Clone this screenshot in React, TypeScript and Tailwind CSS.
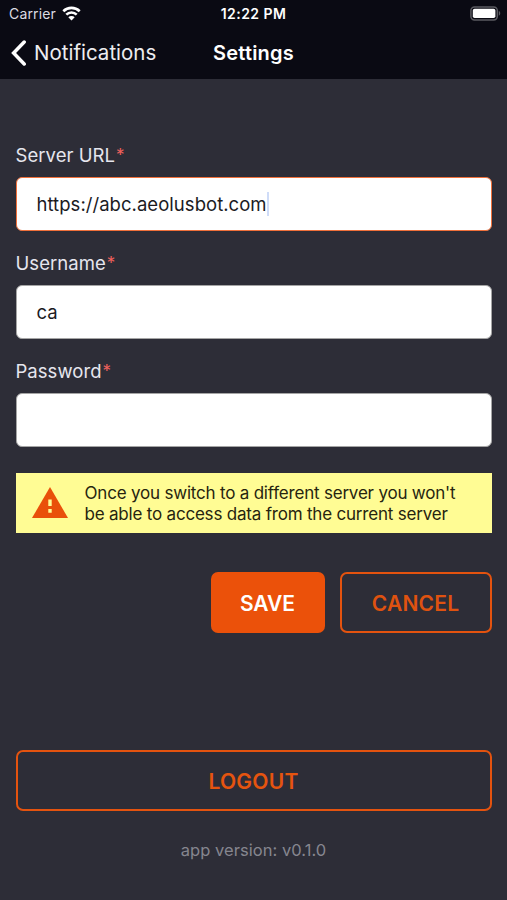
import React from "react";
import clsx from "clsx";

const StatusBar = () => (
    <div className="grid h-[27px] grid-cols-3 items-center pl-[9px] pr-[6px] text-white">
        <div className="flex items-center gap-[6px]">
            <span className="text-[14px] leading-[18px] tracking-[0.15px] text-[#dcdce2]">Carrier</span>
            <svg width="19" height="15" viewBox="0 0 19 15" fill="none" stroke="white" strokeWidth="2.6">
                <path d="M1.3 5.2a11.7 11.7 0 0 1 16.4 0" />
                <path d="M4.3 8.7a7.4 7.4 0 0 1 10.4 0" />
                <path d="M9.5 14.4 6.3 11.3a4.5 4.5 0 0 1 6.4 0z" fill="white" stroke="none" />
            </svg>
        </div>
        <span className="-ml-[3px] text-center text-[14px] leading-[18px] font-semibold tracking-[0.45px] whitespace-nowrap">12:22 PM</span>
        <svg className="justify-self-end" width="31" height="15" viewBox="0 0 31 15">
            <rect x="0.9" y="0.9" width="26.4" height="13" rx="3.6" fill="#0b0b13" stroke="#5b5b61" strokeWidth="1.5" />
            <rect x="2.8" y="2.8" width="22.6" height="9.2" rx="1.8" fill="white" />
            <path d="M28.8 5.1c1.9.7 1.9 4 0 4.7z" fill="#5b5b61" />
        </svg>
    </div>
);

const NavBar = () => (
    <div className="grid h-[52px] grid-cols-[200px_107px_200px] items-center text-white">
        <div className="flex items-center gap-[8px] pl-[11px]">
            <svg width="15" height="26" viewBox="0 0 15 26" fill="none" stroke="white" strokeWidth="3.5" strokeLinecap="round">
                <path d="M13.2 2 2.6 13l10.6 11" />
            </svg>
            <span className="text-[20.5px] leading-[26px] text-[#ededf0]">Notifications</span>
        </div>
        <span className="text-center text-[20px] leading-[26px] font-semibold tracking-[0.2px]">Settings</span>
    </div>
);

type FieldProps = {
    label: string;
    value?: string;
    focused?: boolean;
};

const Field = ({ label, value, focused }: FieldProps) => (
    <div className="flex flex-col gap-[10px]">
        <p className="h-[24px] text-[18.5px] leading-[24px] tracking-[0.05px] text-[#e6e6ee]">
            {label}
            <span className="ml-px align-[1px] text-[17px] leading-none text-[#f0605c]">*</span>
        </p>
        <div
            className={clsx(
                "flex h-[54px] items-center rounded-[6px] border bg-white pl-[20px] text-[18.5px] leading-[24px] tracking-[0.04px] text-[#1b1b1f]",
                focused ? "border-[#f0703a]" : "border-[#a5a5a5]"
            )}
        >
            <span>{value}</span>
            {focused && <span className="h-[24px] w-[2px] bg-[#cfdcf8]" />}
        </div>
    </div>
);

const Warning = () => (
    <div className="mt-[26px] flex h-[60px] items-center bg-[#fffc94] pl-[16px]">
        <svg className="mb-[2px]" width="36" height="31" viewBox="0 0 36 31">
            <path d="M18 0 36 31H0z" fill="#e9500a" />
            <path d="M16.3 12.6h3.4v6.4h-3.4zM16.3 22h3.4v3.8h-3.4z" fill="#fffc94" />
        </svg>
        <p className="ml-[17px] pt-[2px] text-[17px] leading-[21px] tracking-[-0.2px] whitespace-nowrap text-[#26240f]">
            Once you switch to a different server you won't
            <br />
            be able to access data from the current server
        </p>
    </div>
);

const App = () => {
    return (
        <div className="h-[900px] w-[507px] overflow-hidden bg-[#2d2d37] font-[Inter,sans-serif]">
            <header className="h-[79px] bg-[#0a0a13]">
                <StatusBar />
                <NavBar />
            </header>
            <main className="px-[15.5px] pt-[64px]">
                <div className="flex flex-col gap-[20px]">
                    <Field label="Server URL" value="https://abc.aeolusbot.com" focused />
                    <Field label="Username" value="ca" />
                    <Field label="Password" />
                </div>
                <Warning />
                <div className="mt-[39px] flex justify-end gap-[15px]">
                    <button className="h-[61px] w-[114px] rounded-[7px] bg-[#eb510a] pt-[2px] text-[21px] font-semibold text-white">SAVE</button>
                    <button className="h-[61px] w-[152px] rounded-[7px] border-2 border-[#e4530f] pt-[2px] text-[21px] font-semibold tracking-[0.2px] text-[#df5210]">CANCEL</button>
                </div>
                <button className="mt-[117px] h-[61px] w-full rounded-[7px] border-2 border-[#e4530f] pt-[2px] text-[21px] font-semibold tracking-[0.25px] text-[#e5540f]">LOGOUT</button>
                <p className="mt-[27px] text-center text-[16.5px] leading-[24px] tracking-[0.05px] text-[#86868f]">app version: v0.1.0</p>
            </main>
        </div>
    );
};

export default App;
